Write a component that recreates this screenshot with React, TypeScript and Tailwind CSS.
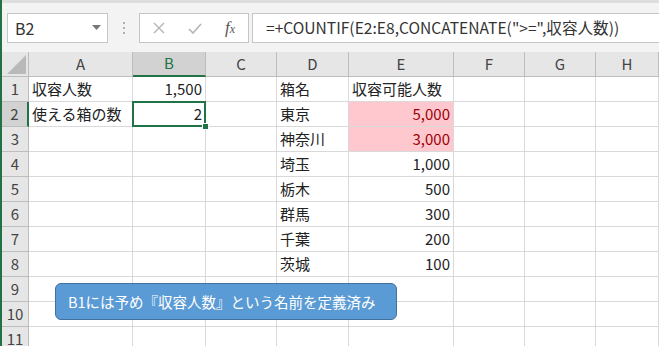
import React from "react";

const cols = ["A", "B", "C", "D", "E", "F", "G", "H"];
const colW = ["w-[104px]", "w-[73px]", "w-[71px]", "w-[72px]", "w-[105px]", "w-[71px]", "w-[71px]", "flex-1"];

type Cell = { text?: string; right?: boolean; pink?: boolean; selected?: boolean };

const rows: Record<number, Record<number, Cell>> = {
  1: { 0: { text: "収容人数" }, 1: { text: "1,500", right: true }, 3: { text: "箱名" }, 4: { text: "収容可能人数" } },
  2: { 0: { text: "使える箱の数" }, 1: { text: "2", right: true, selected: true }, 3: { text: "東京" }, 4: { text: "5,000", right: true, pink: true } },
  3: { 3: { text: "神奈川" }, 4: { text: "3,000", right: true, pink: true } },
  4: { 3: { text: "埼玉" }, 4: { text: "1,000", right: true } },
  5: { 3: { text: "栃木" }, 4: { text: "500", right: true } },
  6: { 3: { text: "群馬" }, 4: { text: "300", right: true } },
  7: { 3: { text: "千葉" }, 4: { text: "200", right: true } },
  8: { 3: { text: "茨城" }, 4: { text: "100", right: true } },
  9: {},
  10: {},
  11: {},
};

const font = { fontFamily: '"Noto Sans CJK JP", "Noto Sans", sans-serif' };

export default function App() {
  return (
    <div className="relative h-[346px] w-[659px] overflow-hidden bg-white border-l-2 border-[#217346]" style={font}>
      {/* Formula bar */}
      <div className="h-[3px] bg-[#dedede]" />
      <div className="flex h-[49px] items-start bg-[#f3f3f3] pl-[5px] pt-[10px]">
        <div className="flex h-[30px] w-[101px] items-center justify-between border border-[#c6c6c6] bg-white pl-[7px] pr-[6px]">
          <span className="text-[16px] text-[#333]">B2</span>
          <svg width="9" height="6" viewBox="0 0 9 6"><path d="M0 0h9L4.5 5z" fill="#777" /></svg>
        </div>
        <div className="flex h-[30px] w-[31px] flex-col items-center justify-center gap-[3px]">
          <span className="h-[2px] w-[2px] bg-[#b0b0b0]" />
          <span className="h-[2px] w-[2px] bg-[#b0b0b0]" />
          <span className="h-[2px] w-[2px] bg-[#b0b0b0]" />
        </div>
        <div className="flex h-[30px] w-[110px] items-center border border-[#c6c6c6] bg-white">
          <div className="flex w-[38px] justify-center">
            <svg width="12" height="12" viewBox="0 0 12 12"><path d="M1 1l10 10M11 1L1 11" stroke="#b5b5b5" strokeWidth="1.4" /></svg>
          </div>
          <div className="flex w-[34px] justify-center">
            <svg width="14" height="11" viewBox="0 0 14 11"><path d="M1 6l4 4 8-9" stroke="#b5b5b5" strokeWidth="1.6" fill="none" /></svg>
          </div>
          <div className="flex w-[36px] justify-center">
            <span className="text-[17px] italic text-[#555]" style={{ fontFamily: '"Liberation Serif", serif' }}>
              f<span className="text-[12px]">x</span>
            </span>
          </div>
        </div>
        <div className="ml-[3px] flex h-[30px] flex-1 items-center border border-r-0 border-[#c6c6c6] bg-white pl-[13px]">
          <span className="whitespace-nowrap text-[15.6px] text-[#333]">=+COUNTIF(E2:E8,CONCATENATE("&gt;=",収容人数))</span>
        </div>
      </div>

      {/* Column headers */}
      <div className="flex h-[25px] bg-[#e6e6e6] text-[15px] text-[#444]">
        <div className="flex w-[27px] shrink-0 items-end justify-end border-r border-b border-[#bdbdbd] pb-[2px] pr-[2px]">
          <svg width="19" height="19" viewBox="0 0 19 19"><path d="M19 0V19H0z" fill="#b9b9b9" /></svg>
        </div>
        {cols.map((c, i) => (
          <div
            key={c}
            className={`${colW[i]} shrink-0 flex items-center justify-center border-r ${
              i === 1 ? "border-b-2 border-b-[#217346] bg-[#d2d2d2] text-[#217346] border-r-[#bdbdbd]" : "border-b border-[#bdbdbd]"
            }`}
          >
            {c}
          </div>
        ))}
      </div>

      {/* Rows */}
      {Object.keys(rows).map((k) => {
        const r = Number(k);
        const data = rows[r];
        return (
          <div key={r} className="flex h-[25px] text-[15px]">
            <div
              className={`flex w-[27px] shrink-0 items-center justify-center border-b border-[#bdbdbd] text-[#444] ${
                r === 2 ? "bg-[#d2d2d2] border-r-2 border-r-[#217346]" : "bg-[#e6e6e6] border-r border-r-[#bdbdbd]"
              }`}
            >
              {r}
            </div>
            {cols.map((c, i) => {
              const cell = data[i] ?? {};
              return (
                <div
                  key={c}
                  className={`${colW[i]} relative shrink-0 flex items-center whitespace-nowrap border-r border-b border-[#d9d9d9] px-[3px] ${
                    cell.right ? "justify-end" : "justify-start"
                  } ${cell.pink ? "bg-[#ffc7ce] text-[#9c0006]" : "text-[#222]"} ${cell.selected ? "z-10" : ""}`}
                >
                  {cell.text}
                  {cell.selected && (
                    <>
                      <div className="absolute -left-[1px] -top-[1px] -right-[1px] -bottom-[1px] border-2 border-[#217346]" />
                      <div className="absolute -right-[4px] -bottom-[4px] h-[7px] w-[7px] border border-white bg-[#217346]" />
                    </>
                  )}
                </div>
              );
            })}
          </div>
        );
      })}

      {/* Callout */}
      <div className="absolute left-[53px] top-[283px] flex h-[37px] w-[342px] items-center rounded-[6px] border border-[#41719c] bg-[#5b9bd5] pl-[12px]">
        <span className="whitespace-nowrap text-[14.5px] text-white">B1には予め『収容人数』という名前を定義済み</span>
      </div>
    </div>
  );
}
